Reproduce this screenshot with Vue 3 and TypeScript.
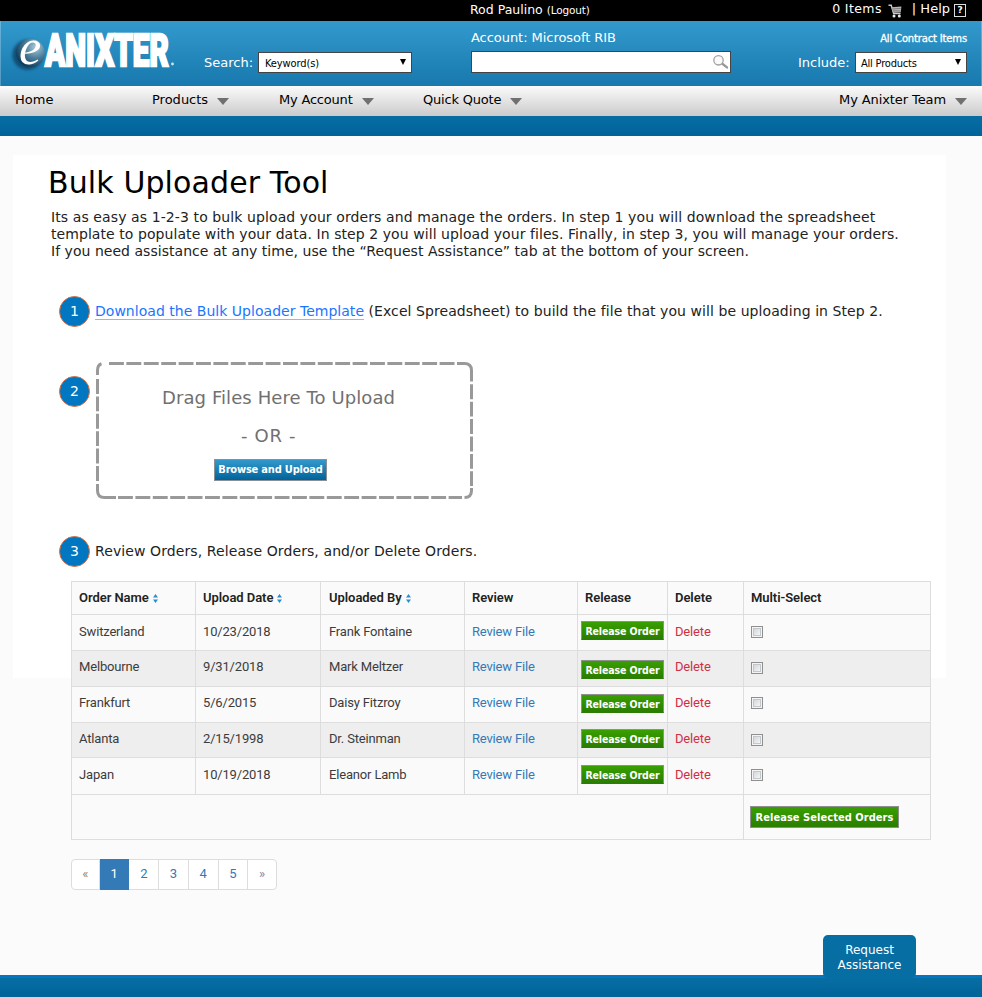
<script setup lang="ts">
import { ref } from 'vue'

interface Order {
  name: string
  date: string
  by: string
  height: number
  textTop: number
  buttonTop: number
  boxTop: number
}

const orders = ref<Order[]>([
  { name: 'Switzerland', date: '10/23/2018', by: 'Frank Fontaine', height: 36, textTop: 7, buttonTop: 6, boxTop: 11 },
  { name: 'Melbourne', date: '9/31/2018', by: 'Mark Meltzer', height: 36, textTop: 6, buttonTop: 9, boxTop: 11 },
  { name: 'Frankfurt', date: '5/6/2015', by: 'Daisy Fitzroy', height: 36, textTop: 6, buttonTop: 7, boxTop: 10 },
  { name: 'Atlanta', date: '2/15/1998', by: 'Dr. Steinman', height: 35, textTop: 6, buttonTop: 6, boxTop: 11 },
  { name: 'Japan', date: '10/19/2018', by: 'Eleanor Lamb', height: 37, textTop: 7, buttonTop: 7, boxTop: 11 },
])

const headers = [
  { label: 'Order Name', sortable: true },
  { label: 'Upload Date', sortable: true },
  { label: 'Uploaded By', sortable: true },
  { label: 'Review', sortable: false },
  { label: 'Release', sortable: false },
  { label: 'Delete', sortable: false },
  { label: 'Multi-Select', sortable: false },
]

const pages = ['«', '1', '2', '3', '4', '5', '»']
const current = ref('1')
</script>

<template>
  <div class="page">
    <div class="topbar">
      <div class="user">Rod Paulino <small>(Logout)</small></div>
      <div class="tools">
        <span class="items">0 Items</span>
        <svg class="cart" width="15" height="14" viewBox="0 0 15 14">
          <path d="M.5 1.300h2.700l2.400 8.200h7" fill="none" stroke="#ccc" stroke-width="1.400" />
          <path d="M3.400 3.200l10-.8-.6 5.900-7.600.5z" fill="#b5b5b5" />
          <path d="M4.200 5l8.600-.6M4.800 6.900h7.800" stroke="#555" stroke-width=".6" />
          <circle cx="6" cy="12" r="1.500" fill="#eee" />
          <circle cx="11.300" cy="12" r="1.500" fill="#eee" />
        </svg>
        <span class="help">| Help</span>
        <span class="qmark">?</span>
      </div>
    </div>

    <header class="header">
      <svg class="logo" width="176" height="65" viewBox="0 0 176 65">
        <defs>
          <radialGradient id="ball" cx=".68" cy=".3" r=".75">
            <stop offset="0" stop-color="#a9cbdc" />
            <stop offset=".5" stop-color="#4d7f9b" />
            <stop offset="1" stop-color="#0d3a58" />
          </radialGradient>
          <filter id="soft"><feGaussianBlur stdDeviation="1.600" /></filter>
        </defs>
        <circle cx="27.500" cy="34" r="15" fill="#0c3f63" opacity=".8" filter="url(#soft)" />
        <circle cx="30.500" cy="32" r="14.300" fill="url(#ball)" />
        <text class="logo-e" x="19" y="42.500">e</text>
        <g transform="translate(45 45) scale(.68 1)">
          <text class="logo-name" x="0" y="0" textLength="182" lengthAdjust="spacingAndGlyphs">ANIXTER</text>
        </g>
        <circle cx="172.500" cy="43" r="1.400" fill="#cfe4f1" />
      </svg>
      <label class="lab search-lab">Search:</label>
      <div class="select kw"><span>Keyword(s)</span><i></i></div>
      <div class="account">Account: Microsoft RIB</div>
      <div class="search-box">
        <svg width="17" height="17" viewBox="0 0 17 17">
          <path d="M10.300 9.800l4.700 3.600" stroke="#999" stroke-width="2.400" stroke-linecap="round" />
          <circle cx="6.500" cy="6.300" r="4.700" fill="#fafafa" stroke="#a0a0a0" stroke-width="1.300" />
        </svg>
      </div>
      <div class="contract">All Contract Items</div>
      <label class="lab include-lab">Include:</label>
      <div class="select inc"><span>All Products</span><i></i></div>
    </header>

    <nav class="nav">
      <a class="n-home">Home</a>
      <a class="n-products">Products<i></i></a>
      <a class="n-account">My Account<i></i></a>
      <a class="n-quote">Quick Quote<i></i></a>
      <a class="n-team">My Anixter Team<i></i></a>
    </nav>
    <div class="strip"></div>

    <main class="main">
      <section class="panel">
        <h1>Bulk Uploader Tool</h1>
        <p class="intro">
          <span class="l1">Its as easy as 1-2-3 to bulk upload your orders and manage the orders. In step 1 you will download the spreadsheet</span>
          <span class="l2">template to populate with your data. In step 2 you will upload your files. Finally, in step 3, you will manage your orders.</span>
          <span class="l3">If you need assistance at any time, use the “Request Assistance” tab at the bottom of your screen.</span>
        </p>

        <div class="step step1">
          <span class="badge">1</span>
          <p><a>Download the Bulk Uploader Template</a><span class="rest"> (Excel Spreadsheet) to build the file that you will be uploading in Step 2.</span></p>
        </div>

        <div class="step step2">
          <span class="badge">2</span>
          <div class="drop">
            <svg class="dashes" width="377" height="137" viewBox="0 0 377 137">
              <g fill="none" stroke="#999" stroke-width="3">
                <path d="M13 1.500H360" stroke-dasharray="14.900 2.500" />
                <path d="M361 1.500h7.500q7 0 7 7v11M375.500 126v2.500q0 7 -7 7M8.500 135.500q-7 0 -7-7V122M1.500 13V8.500q0-5.500 4-6.700" />
                <path d="M375.500 22.300V124" stroke-dasharray="14.900 2.500" />
                <path d="M1.500 17V119" stroke-dasharray="14.900 2.500" />
                <path d="M8 135.500h12M22 135.500H366" stroke-dasharray="14.900 2.500" />
              </g>
            </svg>
            <div class="drag">Drag Files Here To Upload</div>
            <div class="or">- OR -</div>
            <button class="browse">Browse and Upload</button>
          </div>
        </div>

        <div class="step step3">
          <span class="badge">3</span>
          <p>Review Orders, Release Orders, and/or Delete Orders.</p>
        </div>

        <table class="orders">
          <colgroup>
            <col class="c1" /><col class="c2" /><col class="c3" /><col class="c4" /><col class="c5" /><col class="c6" /><col class="c7" />
          </colgroup>
          <thead>
            <tr>
              <th v-for="h in headers" :key="h.label">
                {{ h.label }}<svg v-if="h.sortable" class="sort" width="5" height="9" viewBox="0 0 5 9"><path d="M2.500 0L5 3.600H0zM0 5.400h5L2.500 9z" fill="#2a8fcb" /></svg>
              </th>
            </tr>
          </thead>
          <tbody>
            <tr v-for="o in orders" :key="o.name" :style="{ height: o.height + 'px' }">
              <td :style="{ paddingTop: o.textTop + 'px' }">{{ o.name }}</td>
              <td :style="{ paddingTop: o.textTop + 'px' }">{{ o.date }}</td>
              <td :style="{ paddingTop: o.textTop + 'px' }">{{ o.by }}</td>
              <td :style="{ paddingTop: o.textTop + 'px' }"><a class="review">Review File</a></td>
              <td class="release-cell" :style="{ paddingTop: o.buttonTop + 'px' }"><button class="release">Release Order</button></td>
              <td :style="{ paddingTop: o.textTop + 'px' }"><a class="delete">Delete</a></td>
              <td :style="{ paddingTop: o.boxTop + 'px' }"><span class="check" role="checkbox"></span></td>
            </tr>
          </tbody>
          <tfoot>
            <tr>
              <td colspan="6"></td>
              <td class="release-all"><button class="release selected">Release Selected Orders</button></td>
            </tr>
          </tfoot>
        </table>

        <div class="pager">
          <a v-for="p in pages" :key="p" :class="{ on: p === current, arrow: p === '«' || p === '»' }" @click="current = p">{{ p }}</a>
        </div>
      </section>
    </main>

    <footer class="footer">
      <div class="assist">Request<br />Assistance</div>
    </footer>
  </div>
</template>

<style>
body {
  background: #fbfbfb;
}
</style>

<style scoped>
.page {
  width: 982px;
  height: 997px;
  overflow: hidden;
  display: flex;
  flex-direction: column;
  background: #fbfbfb;
  color: #000;
  font-family: 'DejaVu Sans', Verdana, sans-serif;
  font-size: 13px;
  white-space: nowrap;
}
.page * {
  box-sizing: border-box;
}
.topbar {
  height: 21px;
  background: #000;
  color: #fff;
  display: flex;
  justify-content: space-between;
  padding: 0 16px 0 470px;
  line-height: 18px;
  font-size: 12.500px;
}
.user {
  line-height: 20px;
}
.user small {
  font-size: 10.500px;
  letter-spacing: -0.150px;
}
.tools {
  display: flex;
}
.items {
  letter-spacing: 0.400px;
}
.cart {
  margin: 4px 9px 0 6px;
}
.qmark {
  width: 12px;
  height: 13px;
  border: 1px solid #ddd;
  margin: 4px 0 0 4px;
  font: bold 9px/11px 'DejaVu Sans', sans-serif;
  text-align: center;
}
.help {
  font-size: 13px;
}
.header {
  height: 65px;
  display: grid;
  grid-template-columns: 204px 54px 154px 59px 260px 67px 57px 112px;
  grid-template-rows: 30px 35px;
  padding-right: 15px;
  background: linear-gradient(#3399cc, #1779ae);
  box-shadow: inset 1px 0 rgba(255, 255, 255, 0.25), inset -1px 0 rgba(255, 255, 255, 0.25);
  color: #fff;
}
.logo {
  grid-area: 1 / 1 / 3 / 2;
  overflow: visible;
}
.logo-e {
  font: italic 50px 'Liberation Serif', serif;
  fill: #fff;
}
.logo-name {
  font: 900 44px Roboto, 'Liberation Sans', sans-serif;
  fill: #fff;
  stroke: #fff;
  stroke-width: 2.400px;
}
.lab {
  line-height: 21px;
  margin-top: 1px;
}
.search-lab {
  grid-area: 2 / 2;
}
.select {
  height: 21px;
  margin-top: 1px;
  border: 1px solid #444;
  background: #fff;
  color: #000;
  display: flex;
  justify-content: space-between;
  align-items: center;
  padding: 0 5px 0 6px;
  font: 11px/19px 'DejaVu Sans Condensed', 'DejaVu Sans', sans-serif;
  font-stretch: condensed;
  letter-spacing: -0.100px;
}
.select span {
  padding-top: 1px;
}
.select i {
  border: 3.500px solid transparent;
  border-top: 6px solid #000;
  border-bottom: 0;
  margin-top: -2px;
}
.kw {
  grid-area: 2 / 3;
}
.account {
  grid-area: 1 / 5;
  line-height: 33px;
  letter-spacing: -0.050px;
}
.search-box {
  grid-area: 2 / 5;
  height: 22px;
  border: 1px solid #444;
  background: #fff;
  display: flex;
  justify-content: flex-end;
  padding: 2px 1px;
}
.contract {
  grid-area: 1 / 7 / 2 / 9;
  text-align: right;
  font-size: 10px;
  letter-spacing: -0.160px;
  line-height: 35px;
  -webkit-text-stroke: 0.300px #fff;
}
.include-lab {
  grid-area: 2 / 7;
}
.inc {
  grid-area: 2 / 8;
  padding-left: 5px;
  letter-spacing: -0.200px;
}
.nav {
  height: 30px;
  display: flex;
  background: linear-gradient(#fbfbfb, #cbcbcb);
  padding: 0 15px 0 15px;
  line-height: 27px;
}
.nav a {
  display: flex;
}
.nav i {
  border: 6px solid transparent;
  border-top: 7px solid #707070;
  border-bottom: 0;
  margin: 12px 0 0 9px;
  height: 0;
}
.n-home {
  width: 137px;
}
.n-products {
  width: 127px;
}
.n-account {
  width: 144px;
}
.n-account,
.n-quote {
  letter-spacing: -0.200px;
}
.nav .n-team {
  margin-left: auto;
  letter-spacing: -0.100px;
}
.strip {
  height: 20px;
  background: linear-gradient(#086da3, #00649a);
}
.main {
  flex: 1;
  padding: 19px 36px 0 13px;
}
.panel {
  height: 523px;
  background: #fff;
  padding: 0 0 0 36px;
}
h1 {
  margin: 0 0 0 -1px;
  padding-top: 10px;
  font-weight: 400;
  font-size: 30px;
  line-height: 36px;
  letter-spacing: 0.110px;
}
.intro {
  margin: 8px 0 0 2px;
  font-size: 14px;
  line-height: 17px;
  color: #222;
}
.intro span {
  display: block;
}
.l1 {
  letter-spacing: 0.097px;
}
.l2 {
  letter-spacing: 0.070px;
}
.l3 {
  letter-spacing: 0.032px;
}
.step {
  display: flex;
  margin-left: 10px;
  font-size: 14px;
  color: #222;
}
.step p {
  margin: 0 0 0 5px;
  line-height: 30px;
}
.step a {
  color: #1a75ff;
  border-bottom: 1px solid #8db8ff;
  letter-spacing: 0.025px;
}
.rest {
  letter-spacing: 0.070px;
}
.step3 p {
  letter-spacing: 0.095px;
}
.badge {
  width: 31px;
  height: 31px;
  border-radius: 50%;
  border: 1px solid #e0703c;
  background: #0077c0;
  color: #fff;
  text-align: center;
  line-height: 29px;
  flex: none;
}
.step1 {
  margin-top: 36px;
  height: 66px;
}
.step2 {
  height: 174px;
}
.step2 .badge {
  margin-top: 14px;
}
.drop {
  position: relative;
  width: 377px;
  height: 137px;
  margin-left: 6px;
  color: #707070;
  font-size: 18px;
}
.dashes {
  position: absolute;
  left: 0;
  top: 0;
}
.drag {
  padding: 24px 0 0 66px;
  line-height: 24px;
  letter-spacing: 0.090px;
}
.or {
  padding: 14px 0 0 145px;
  line-height: 24px;
  letter-spacing: 0.700px;
}
.browse {
  display: block;
  width: 113px;
  height: 22px;
  margin: 11px 0 0 118px;
  padding: 0;
  border: 1px solid #8a8f94;
  background: linear-gradient(#3399cc, #00629a);
  color: #fff;
  font: bold 11px/20px 'DejaVu Sans Condensed', 'DejaVu Sans', sans-serif;
  font-stretch: condensed;
  letter-spacing: -0.200px;
}
.orders {
  table-layout: fixed;
  width: 860px;
  margin: 14px 0 0 22px;
  border-collapse: separate;
  border-spacing: 0;
  border: 0 solid #ddd;
  border-right-width: 1px;
  border-bottom-width: 1px;
  background: #fafafa;
  font: 13px/19px Roboto, sans-serif;
  letter-spacing: -0.170px;
  color: #3c3c3c;
}
.c1 { width: 124px; }
.c2 { width: 125px; }
.c3 { width: 144px; }
.c4 { width: 113px; }
.c5 { width: 90px; }
.c6 { width: 76px; }
.c7 { width: 187px; }
.orders th,
.orders td {
  border: 0 solid #ddd;
  border-width: 1px 0 0 1px;
  padding: 0 0 0 7px;
  text-align: left;
  vertical-align: top;
}
.orders th:nth-child(3),
.orders td:nth-child(3) {
  padding-left: 8px;
}
.orders th {
  height: 33px;
  padding-top: 6px;
  font-weight: 600;
  letter-spacing: -0.050px;
  color: #222;
}
.orders tbody tr:nth-child(even) {
  background: #eee;
}
.sort {
  margin-left: 4px;
  vertical-align: -1px;
}
.review {
  color: #337ab7;
}
.delete {
  color: #d02f45;
}
.orders .release-cell {
  padding-left: 3px;
}
.release {
  display: block;
  width: 83px;
  height: 19px;
  padding: 1px 0 0;
  border: 1px solid #8f8f8f;
  border-bottom-color: #2c7c05;
  background: linear-gradient(#39a000, #2a7d00);
  color: #fff;
  font: bold 10.500px/17px 'DejaVu Sans Condensed', 'DejaVu Sans', sans-serif;
  font-stretch: condensed;
  letter-spacing: -0.100px;
}
.selected {
  width: 149px;
  height: 22px;
  border: 1px solid #8f8f8f;
  font-size: 11px;
  letter-spacing: 0.050px;
}
.orders .release-all {
  height: 45px;
  padding: 11px 0 0 6px;
}
.check {
  display: block;
  width: 12px;
  height: 12px;
  border: 1px solid #8e8f8f;
  box-shadow: inset 0 0 0 1px #f4f4f4, inset 0 0 0 2px #c4c7ca;
  background: linear-gradient(135deg, #c9ccd2, #fff);
}
.pager {
  display: flex;
  width: 206px;
  height: 31px;
  margin: 19px 0 0 22px;
  border: 1px solid #ddd;
  border-radius: 4px;
  background: #fff;
  font: 13px/28px Roboto, sans-serif;
  color: #337ab7;
}
.pager a {
  width: 30px;
  text-align: center;
  border-right: 1px solid #ddd;
}
.pager .arrow {
  width: 28px;
  color: #888;
}
.pager a:last-child {
  border: 0;
}
.pager .on {
  margin: -1px 0;
  line-height: 30px;
  background: #337ab7;
  border-color: #337ab7;
  color: #fff;
}
.footer {
  height: 22px;
  border-top: 3px solid #0077c0;
  background: linear-gradient(#076ea4, #00639a);
  position: relative;
}
.assist {
  position: absolute;
  left: 823px;
  top: -43px;
  width: 93px;
  height: 43px;
  border-radius: 5px;
  background: #076ea4;
  color: #fff;
  text-align: center;
  font-size: 12px;
  line-height: 15px;
  padding-top: 8px;
}
</style>
